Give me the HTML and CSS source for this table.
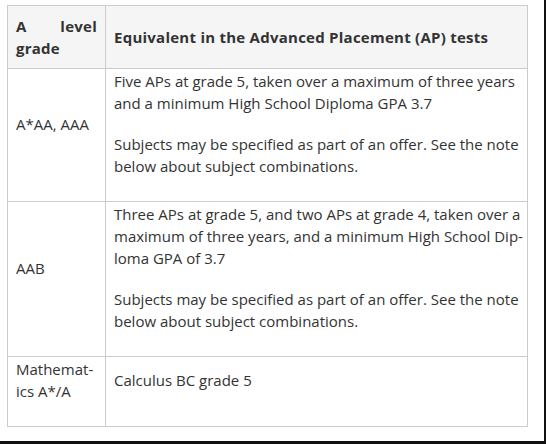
FILE: index.html
```html
<!DOCTYPE html>
<html lang="en">
<head>
    <meta charset="UTF-8">
    <meta name="viewport" content="width=device-width, initial-scale=1.0">
    <title>AP Equivalents</title>
    <link rel="stylesheet" href="styles.css">
</head>
<body>
    <div class="frame">
        <table class="grades">
            <thead>
                <tr>
                    <th class="col-grade">A level grade</th>
                    <th>Equivalent in the Advanced Placement (AP) tests</th>
                </tr>
            </thead>
            <tbody>
                <tr>
                    <td><p>A*AA, AAA</p></td>
                    <td>
                        <p>Five APs at grade 5, taken over a maximum of three years and a minimum High School Diploma GPA 3.7</p>
                        <p>Subjects may be specified as part of an offer. See the note below about subject combinations.</p>
                    </td>
                </tr>
                <tr>
                    <td><p>AAB</p></td>
                    <td>
                        <p>Three APs at grade 5, and two APs at grade 4, taken over a maximum of three years, and a minimum High School Dip&shy;loma GPA of 3.7</p>
                        <p>Subjects may be specified as part of an offer. See the note below about subject combinations.</p>
                    </td>
                </tr>
                <tr>
                    <td><p>Mathemat&shy;ics A*/A</p></td>
                    <td><p>Calculus BC grade 5</p></td>
                </tr>
            </tbody>
        </table>
    </div>
</body>
</html>
```

FILE: styles.css
```css
html {
    background: #111;
}

body {
    margin: 0;
    width: 544px;
    height: 441px;
    background: #fff;
    font-family: "Open Sans", "Noto Sans", sans-serif;
    font-size: 15px;
    color: #333;
}

.frame {
    padding: 5px 0 0 7px;
}

.grades {
    width: 521px;
    border-collapse: collapse;
    line-height: 22px;
}

.grades th,
.grades td {
    border: 1px solid #ccc;
    padding: 1px 4px 5px 8px;
    vertical-align: middle;
    text-align: left;
}

.grades th {
    background: #f5f5f5;
    font-weight: bold;
    letter-spacing: 0.25px;
    padding: 9px 8px 9px;
}

.grades .col-grade {
    width: 81px;
    text-align: justify;
}

.grades p {
    margin: 0 0 19px;
    hyphens: manual;
}
```
